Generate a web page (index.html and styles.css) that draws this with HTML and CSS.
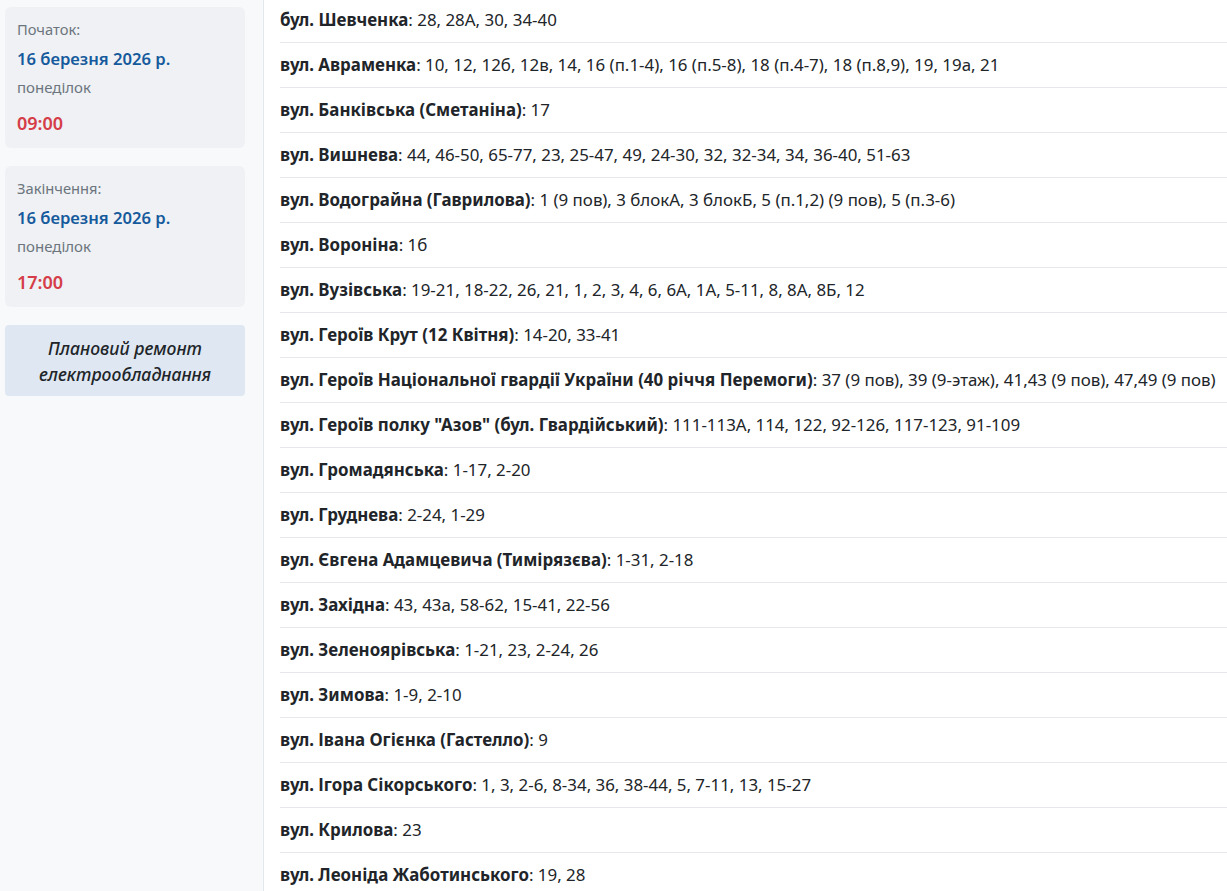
FILE: index.html
```html
<!DOCTYPE html>
<html lang="uk">
<head>
    <meta charset="utf-8">
    <title>Планові відключення</title>
    <link rel="stylesheet" href="styles.css">
</head>
<body>
    <div class="layout">
        <!-- Sidebar with period info -->
        <aside class="sidebar">
            <div class="time-card">
                <div class="time-label">Початок:</div>
                <div class="time-date">16 березня 2026 р.</div>
                <div class="time-day">понеділок</div>
                <div class="time-hour">09:00</div>
            </div>
            <div class="time-card">
                <div class="time-label">Закінчення:</div>
                <div class="time-date">16 березня 2026 р.</div>
                <div class="time-day">понеділок</div>
                <div class="time-hour">17:00</div>
            </div>
            <div class="reason">Плановий ремонт електрообладнання</div>
        </aside>

        <!-- Address list -->
        <main class="content">
            <ul class="streets">
                <li><b>бул. Шевченка</b>: 28, 28А, 30, 34-40</li>
                <li><b>вул. Авраменка</b>: 10, 12, 12б, 12в, 14, 16 (п.1-4), 16 (п.5-8), 18 (п.4-7), 18 (п.8,9), 19, 19а, 21</li>
                <li><b>вул. Банківська (Сметаніна)</b>: 17</li>
                <li><b>вул. Вишнева</b>: 44, 46-50, 65-77, 23, 25-47, 49, 24-30, 32, 32-34, 34, 36-40, 51-63</li>
                <li><b>вул. Водограйна (Гаврилова)</b>: 1 (9 пов), 3 блокА, 3 блокБ, 5 (п.1,2) (9 пов), 5 (п.3-6)</li>
                <li><b>вул. Вороніна</b>: 1б</li>
                <li><b>вул. Вузівська</b>: 19-21, 18-22, 26, 21, 1, 2, 3, 4, 6, 6А, 1А, 5-11, 8, 8А, 8Б, 12</li>
                <li><b>вул. Героїв Крут (12 Квітня)</b>: 14-20, 33-41</li>
                <li><b>вул. Героїв Національної гвардії України (40 річчя Перемоги)</b>: 37 (9 пов), 39 (9-этаж), 41,43 (9 пов), 47,49 (9 пов)</li>
                <li><b>вул. Героїв полку "Азов" (бул. Гвардійський)</b>: 111-113А, 114, 122, 92-126, 117-123, 91-109</li>
                <li><b>вул. Громадянська</b>: 1-17, 2-20</li>
                <li><b>вул. Груднева</b>: 2-24, 1-29</li>
                <li><b>вул. Євгена Адамцевича (Тимірязєва)</b>: 1-31, 2-18</li>
                <li><b>вул. Західна</b>: 43, 43а, 58-62, 15-41, 22-56</li>
                <li><b>вул. Зеленоярівська</b>: 1-21, 23, 2-24, 26</li>
                <li><b>вул. Зимова</b>: 1-9, 2-10</li>
                <li><b>вул. Івана Огієнка (Гастелло)</b>: 9</li>
                <li><b>вул. Ігора Сікорського</b>: 1, 3, 2-6, 8-34, 36, 38-44, 5, 7-11, 13, 15-27</li>
                <li><b>вул. Крилова</b>: 23</li>
                <li><b>вул. Леоніда Жаботинського</b>: 19, 28</li>
            </ul>
        </main>
    </div>
</body>
</html>
```

FILE: styles.css
```css
* {
    box-sizing: border-box;
    margin: 0;
    padding: 0;
}

body {
    font-family: "Noto Sans", "Open Sans", sans-serif;
    color: #212529;
    background: #fff;
    height: 891px;
    overflow: hidden;
}

.layout {
    display: flex;
    height: 100%;
}

/* Left column */
.sidebar {
    width: 264px;
    flex-shrink: 0;
    background-color: #f8f9fa;
    border-right: 1px solid #e3e6ea;
    padding: 7px 18px 0 5px;
    display: flex;
    flex-direction: column;
    gap: 18px;
}

.time-card {
    background-color: #eff1f4;
    border-radius: 6px;
    padding: 12px 12px 12px;
}
.time-label {
    font-size: 14.7px;
    line-height: 20px;
    color: #6c757d;
}
.time-date {
    margin-top: 6px;
    font-size: 16.6px;
    line-height: 28px;
    font-weight: 600;
    color: #155a9c;
}
.time-day {
    margin-top: 3px;
    font-size: 15px;
    line-height: 22px;
    color: #6c757d;
}
.time-hour {
    margin-top: 12px;
    font-size: 18px;
    line-height: 26px;
    font-weight: 600;
    color: #d53d48;
}

.reason {
    background-color: #dfe8f2;
    border-radius: 4px;
    padding: 10px 10px 9px;
    text-align: center;
    font-style: italic;
    font-weight: 500;
    font-size: 17.6px;
    line-height: 26px;
}

/* Right column */
.content {
    flex: 1;
    padding-left: 16px;
    overflow: hidden;
}

.streets {
    list-style: none;
    margin-top: -2px;
}
.streets li {
    padding: 10px 0;
    border-bottom: 1px solid #e6e8eb;
    font-size: 16.9px;
    line-height: 24px;
    white-space: nowrap;
}
.streets b {
    font-weight: 700;
}
```
